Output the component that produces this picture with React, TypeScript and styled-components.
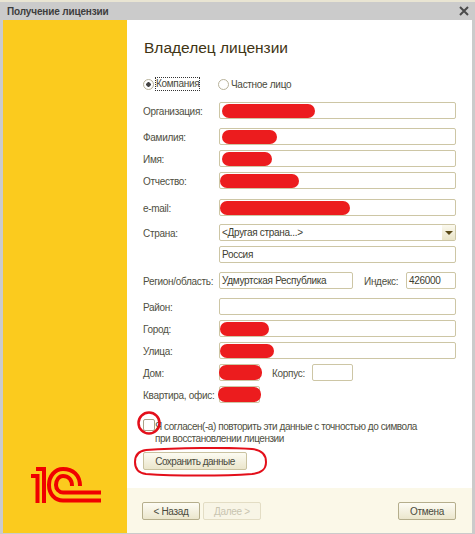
import * as React from 'react';
import styled, { createGlobalStyle } from 'styled-components';

const GlobalStyle = createGlobalStyle`
	html, body {
		margin: 0;
		padding: 0;
		background: #f3f0e2;
		font-family: "Liberation Sans", Arial, sans-serif;
	}
`;

const Logo = () => (
	<LogoSvg viewBox="0 0 72 40" width="72" height="40">
		<g fill="none" stroke="#f00000" strokeWidth="4">
			<path d="M1 11 H7.5 V38 M6 4 H14 V38" />
			<path d="M50 21 C50 10 43 4 33 4 C25 4 19 11 19 20 C19 29 25 35.5 33 35.5 H71" />
			<path d="M42 21 C42 14 38 11 33 11 C29 11 26 15 26 20 C26 24 29 27.5 33 27.5 H71" />
		</g>
	</LogoSvg>
);

const Field = ({ w, blob, left = 2, tall, children }: { w?: number; blob?: number; left?: number; tall?: boolean; children?: React.ReactNode }) => (
	<FieldBox $w={w}>
		{blob ? <Blob $w={blob} $left={left} $tall={tall} /> : null}
		{children}
	</FieldBox>
);

const App = () => (
	<Win>
		<GlobalStyle />
		<TitleBar>
			<TitleText>Получение лицензии</TitleText>
			<CloseIcon viewBox="0 0 10 10" width="10" height="10">
				<path d="M1 1 L9 9 M9 1 L1 9" stroke="#4a4a4a" strokeWidth="2" fill="none" />
			</CloseIcon>
		</TitleBar>
		<Body>
			<Sidebar>
				<Logo />
			</Sidebar>
			<Main>
				<Content>
					<Heading>Владелец лицензии</Heading>
					<RadioRow>
						<RadioItem $w={75}>
							<Radio $on />
							<FocusLabel>Компания</FocusLabel>
						</RadioItem>
						<RadioItem>
							<Radio />
							<span>Частное лицо</span>
						</RadioItem>
					</RadioRow>

					<Row $top={11}>
						<Label>Организация:</Label>
						<Field blob={93} />
					</Row>
					<Row $top={9}>
						<Label>Фамилия:</Label>
						<Field blob={55} />
					</Row>
					<Row $top={5}>
						<Label>Имя:</Label>
						<Field blob={50} />
					</Row>
					<Row $top={5}>
						<Label>Отчество:</Label>
						<Field blob={79} left={0} />
					</Row>
					<Row $top={10}>
						<Label>e-mail:</Label>
						<Field blob={130} left={0} />
					</Row>
					<Row $top={8}>
						<Label>Страна:</Label>
						<FieldBox>
							<FieldText>&lt;Другая страна...&gt;</FieldText>
							<DropButton>
								<DropArrow />
							</DropButton>
						</FieldBox>
					</Row>
					<Row $top={5}>
						<Label />
						<Field>
							<FieldText>Россия</FieldText>
						</Field>
					</Row>
					<Row $top={9}>
						<Label>Регион/область:</Label>
						<Field w={134}>
							<FieldText>Удмуртская Республика</FieldText>
						</Field>
						<InlineLabel $left={11} $w={42}>
							Индекс:
						</InlineLabel>
						<Field w={50}>
							<FieldText>426000</FieldText>
						</Field>
					</Row>
					<Row $top={9}>
						<Label>Район:</Label>
						<Field />
					</Row>
					<Row $top={5}>
						<Label>Город:</Label>
						<Field blob={49} left={0} />
					</Row>
					<Row $top={5}>
						<Label>Улица:</Label>
						<Field blob={54} left={0} />
					</Row>
					<Row $top={5}>
						<Label>Дом:</Label>
						<Field w={41} blob={43} left={-1} tall />
						<InlineLabel $left={12} $w={40}>
							Корпус:
						</InlineLabel>
						<Field w={41} />
					</Row>
					<Row $top={5}>
						<Label>Квартира, офис:</Label>
						<Field w={41} blob={43} left={-2} tall />
					</Row>

					<AgreeRow>
						<CheckWrap>
							<CheckBox />
							<CheckCircle viewBox="0 0 24 24" width="24" height="24">
								<ellipse cx="12" cy="12" rx="10.5" ry="10.5" fill="none" stroke="#e30f1a" strokeWidth="2.5" />
							</CheckCircle>
						</CheckWrap>
						<AgreeText>
							Я согласен(-а) повторить эти данные с точностью до символа
							<br />
							при восстановлении лицензии
						</AgreeText>
					</AgreeRow>

					<SaveWrap>
						<SaveButton>Сохранить данные</SaveButton>
						<SaveCircle viewBox="0 0 134 30" width="134" height="30">
							<path
								d="M12 3 C40 1 95 0 118 2 C128 3 132 8 132 15 C132 23 127 26 118 27 C90 29 40 29 12 27 C4 26 1 21 1 15 C1 8 5 4 12 3"
								fill="none"
								stroke="#e30f1a"
								strokeWidth="2"
							/>
						</SaveCircle>
					</SaveWrap>
				</Content>
				<Footer>
					<NavButton>&lt; Назад</NavButton>
					<NavButton disabled>Далее &gt;</NavButton>
					<Spacer />
					<NavButton>Отмена</NavButton>
				</Footer>
			</Main>
		</Body>
	</Win>
);

export default App;

const Win = styled.div`
	width: 475px;
	height: 534px;
	box-sizing: border-box;
	padding-top: 2px;
	display: flex;
	flex-direction: column;
	background: #e9e5d3;
	overflow: hidden;
`;

const TitleBar = styled.div`
	height: 18px;
	flex: none;
	display: flex;
	align-items: center;
	justify-content: space-between;
	padding: 0 4px 0 7px;
	background: #cbcbcb;
`;

const TitleText = styled.span`
	font-size: 10px;
	letter-spacing: -0.15px;
	font-weight: bold;
	color: #3d3d3d;
`;

const CloseIcon = styled.svg`
	display: block;
	margin-right: 2px;
`;

const Body = styled.div`
	flex: 1;
	display: flex;
	min-height: 0;
	border-left: 3px solid #cbcbcb;
	border-right: 3px solid #cbcbcb;
	border-bottom: 1px solid #cbcbcb;
`;

const Sidebar = styled.div`
	width: 124px;
	flex: none;
	display: flex;
	flex-direction: column;
	justify-content: flex-end;
	align-items: flex-start;
	padding: 0 0 28px 27px;
	box-sizing: border-box;
	background: #fbcb1e;
`;

const LogoSvg = styled.svg`
	display: block;
`;

const Main = styled.div`
	flex: 1;
	min-width: 0;
	display: flex;
	flex-direction: column;
	background: #fff;
`;

const Content = styled.div`
	flex: 1;
	padding: 0 16px;
`;

const Heading = styled.h1`
	margin: 18px 0 0 1px;
	font-size: 15.5px;
	line-height: 19px;
	font-weight: normal;
	color: #3f3414;
`;

const RadioRow = styled.div`
	display: flex;
	margin-top: 20px;
	height: 14px;
	font-size: 10px;
	letter-spacing: -0.3px;
	color: #4a4a3c;
`;

const RadioItem = styled.label<{ $w?: number }>`
	display: flex;
	align-items: center;
	gap: 2px;
	width: ${(p) => (p.$w ? `${p.$w}px` : 'auto')};
`;

const Radio = styled.span<{ $on?: boolean }>`
	width: 11px;
	height: 11px;
	flex: none;
	box-sizing: border-box;
	border: 1px solid #b8b29a;
	border-radius: 50%;
	background: ${(p) => (p.$on ? 'radial-gradient(circle, #444 0 2px, #fff 2.5px)' : '#fff')};
`;

const FocusLabel = styled.span`
	outline: 1px dotted #333;
	line-height: 12px;
`;

const Row = styled.div<{ $top: number }>`
	display: flex;
	align-items: center;
	height: 17px;
	margin-top: ${(p) => p.$top}px;
`;

const Label = styled.span`
	width: 76px;
	flex: none;
	padding-top: 1px;
	font-size: 10px;
	letter-spacing: -0.3px;
	white-space: nowrap;
	color: #4f4f42;
`;

const InlineLabel = styled.span<{ $left: number; $w: number }>`
	flex: none;
	margin-left: ${(p) => p.$left}px;
	width: ${(p) => p.$w}px;
	padding-top: 1px;
	font-size: 10px;
	letter-spacing: -0.3px;
	white-space: nowrap;
	color: #4f4f42;
`;

const FieldBox = styled.div<{ $w?: number }>`
	position: relative;
	box-sizing: border-box;
	height: 17px;
	display: flex;
	align-items: center;
	justify-content: space-between;
	${(p) => (p.$w ? `width: ${p.$w}px; flex: none;` : 'flex: 1;')}
	border: 1px solid #cdc6a5;
	border-radius: 2px;
	background: #fff;
`;

const Blob = styled.span<{ $w: number; $left: number; $tall?: boolean }>`
	position: absolute;
	top: ${(p) => (p.$tall ? 0 : 1)}px;
	left: ${(p) => p.$left}px;
	width: ${(p) => p.$w}px;
	height: ${(p) => (p.$tall ? 15 : 14)}px;
	border-radius: 7px;
	background: #ec1c1e;
`;

const FieldText = styled.span`
	padding-left: 2px;
	font-size: 10px;
	letter-spacing: -0.3px;
	white-space: nowrap;
	color: #3d3d30;
`;

const DropButton = styled.span`
	width: 13px;
	height: 15px;
	display: flex;
	align-items: center;
	justify-content: center;
	background: linear-gradient(#fbf9ee, #e9e4c8);
`;

const DropArrow = styled.span`
	width: 0;
	height: 0;
	border-left: 4px solid transparent;
	border-right: 4px solid transparent;
	border-top: 4px solid #5a4a18;
`;

const AgreeRow = styled.div`
	display: flex;
	margin-top: 14px;
`;

const CheckWrap = styled.div`
	position: relative;
	width: 12px;
	height: 12px;
	flex: none;
	margin-top: 2px;
`;

const CheckBox = styled.span`
	display: block;
	box-sizing: border-box;
	width: 12px;
	height: 12px;
	border: 1px solid #a8a288;
	border-radius: 2px;
	background: #fff;
`;

const CheckCircle = styled.svg`
	position: absolute;
	left: -6px;
	top: -8px;
`;

const AgreeText = styled.div`
	margin-top: 4px;
	font-size: 10px;
	letter-spacing: -0.45px;
	line-height: 12px;
	color: #4f4f42;
	white-space: nowrap;
`;

const SaveWrap = styled.div`
	position: relative;
	margin-top: 7px;
	width: 104px;
	height: 18px;
`;

const SaveButton = styled.button`
	display: block;
	width: 104px;
	height: 18px;
	padding: 0;
	box-sizing: border-box;
	border: 1px solid #c9c2a0;
	border-radius: 2px;
	background: linear-gradient(#fcfbf2, #ebe6cc);
	font-family: inherit;
	font-size: 10px;
	letter-spacing: -0.5px;
	color: #4a4a3c;
`;

const SaveCircle = styled.svg`
	position: absolute;
	left: -9px;
	top: -5px;
`;

const Footer = styled.div`
	height: 45px;
	flex: none;
	box-sizing: border-box;
	display: flex;
	align-items: flex-start;
	gap: 3px;
	padding: 14px 16px 0 15px;
	background: #fbf8e8;
`;

const Spacer = styled.div`
	flex: 1;
`;

const NavButton = styled.button`
	width: 58px;
	height: 18px;
	padding: 0;
	box-sizing: border-box;
	border: 1px solid ${(p) => (p.disabled ? '#e3ddc4' : '#b5ae8c')};
	border-radius: 2px;
	background: ${(p) => (p.disabled ? '#f8f5e6' : 'linear-gradient(#fdfcf4, #ebe6cc)')};
	font-family: inherit;
	font-size: 10px;
	letter-spacing: -0.3px;
	color: ${(p) => (p.disabled ? '#c8c4b0' : '#4a4a3c')};
`;
